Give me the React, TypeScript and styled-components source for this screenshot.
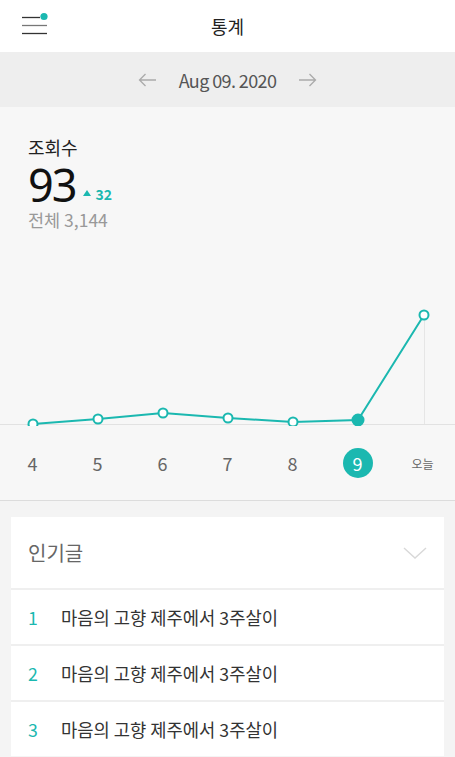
import React from "react";
import styled, { createGlobalStyle } from "styled-components";

const TEAL = "#1bb8b0";

const GlobalStyle = createGlobalStyle`
  html, body {
    margin: 0;
    padding: 0;
    background: #f4f4f4;
  }
  body {
    font-family: "Noto Sans CJK KR", "Noto Sans", sans-serif;
    color: #222;
  }
  * {
    box-sizing: border-box;
  }
`;

const Page = styled.div`
  width: 455px;
  min-height: 757px;
  display: flex;
  flex-direction: column;
  background: #f4f4f4;
`;

const Header = styled.header`
  height: 52px;
  display: flex;
  align-items: center;
  justify-content: center;
  background: #fff;
  position: relative;
`;

const MenuButton = styled.div`
  position: absolute;
  left: 22px;
  top: 12px;
  width: 28px;
  height: 26px;
`;

const Title = styled.h1`
  margin: 0;
  font-size: 18px;
  font-weight: 400;
  line-height: 24px;
  color: #222;
`;

const DateBar = styled.div`
  height: 55px;
  background: #eeeeee;
  display: flex;
  align-items: center;
  justify-content: center;
  gap: 22px;
`;

const DateText = styled.span`
  font-size: 18px;
  line-height: 24px;
  color: #555;
  letter-spacing: -0.6px;
`;

const StatsPanel = styled.section`
  background: #f7f7f7;
  border-bottom: 1px solid #dcdcdc;
`;

const Stats = styled.div`
  padding: 28px 28px 0;
  display: flex;
  flex-direction: column;
`;

const StatLabel = styled.div`
  font-size: 18px;
  line-height: 24px;
  color: #222;
`;

const CountRow = styled.div`
  display: flex;
  align-items: center;
  gap: 8px;
  margin-top: 1px;
`;

const Count = styled.span`
  font-size: 45px;
  line-height: 50px;
  letter-spacing: -2px;
  color: #111;
  font-family: "Noto Sans", sans-serif;
`;

const Delta = styled.span`
  margin-top: 18px;
  display: flex;
  align-items: center;
  gap: 4px;
  font-size: 14px;
  font-weight: 700;
  line-height: 18px;
  color: ${TEAL};
`;

const Triangle = styled.span`
  width: 0;
  height: 0;
  border-left: 4px solid transparent;
  border-right: 4px solid transparent;
  border-bottom: 6px solid ${TEAL};
  margin-top: -3px;
`;

const Total = styled.div`
  font-size: 17.5px;
  line-height: 20px;
  color: #999;
`;

const Chart = styled.svg`
  display: block;
  width: 455px;
  height: 196px;
`;

const DayRow = styled.div`
  height: 74px;
  display: grid;
  grid-template-columns: repeat(7, 1fr);
  align-items: center;
  justify-items: center;
`;

const Day = styled.span<{ $active?: boolean; $small?: boolean }>`
  width: 30px;
  height: 30px;
  border-radius: 50%;
  display: flex;
  align-items: center;
  justify-content: center;
  font-size: ${(p) => (p.$small ? "12px" : "18px")};
  color: ${(p) => (p.$active ? "#fff" : "#666")};
  background: ${(p) => (p.$active ? TEAL : "transparent")};
  white-space: nowrap;
`;

const ListArea = styled.section`
  padding: 16px 11px 0;
`;

const Card = styled.div`
  display: flex;
  flex-direction: column;
  gap: 2px;
  background: #efefef;
`;

const CardHeader = styled.div`
  height: 71px;
  background: #fff;
  display: flex;
  align-items: center;
  justify-content: space-between;
  padding: 0 17px;
`;

const CardTitle = styled.span`
  font-size: 20px;
  color: #666;
`;

const Item = styled.div`
  height: 54px;
  background: #fff;
  display: flex;
  align-items: center;
  padding-left: 17px;
  font-size: 17.7px;
  color: #333;
`;

const Rank = styled.span`
  width: 33px;
  color: ${TEAL};
`;

const Arrow = ({ dir }: { dir: "left" | "right" }) => (
  <svg width="19" height="14" viewBox="0 0 19 14" fill="none" stroke="#aaa" strokeWidth="1.3">
    {dir === "left" ? (
      <path d="M18 7H1.5M7.5 1 1.5 7l6 6" />
    ) : (
      <path d="M1 7h16.5M11.5 1l6 6-6 6" />
    )}
  </svg>
);

const points = [
  { x: 33, y: 194 },
  { x: 98, y: 189 },
  { x: 163, y: 183 },
  { x: 228, y: 188 },
  { x: 293, y: 192 },
  { x: 358, y: 190 },
  { x: 424, y: 85 },
];

const days = ["4", "5", "6", "7", "8", "9", "오늘"];

const posts = [1, 2, 3].map((n) => ({ rank: n, title: "마음의 고향 제주에서 3주살이" }));

export default function App() {
  return (
    <Page>
      <GlobalStyle />
      <Header>
        <MenuButton>
          <svg width="28" height="26" viewBox="0 0 28 26">
            <line x1="0" y1="5.5" x2="18" y2="5.5" stroke="#333" strokeWidth="1.3" />
            <line x1="0" y1="13.5" x2="25" y2="13.5" stroke="#777" strokeWidth="1.3" />
            <line x1="0" y1="21.5" x2="25" y2="21.5" stroke="#333" strokeWidth="1.3" />
            <circle cx="22" cy="4.5" r="3.6" fill={TEAL} />
          </svg>
        </MenuButton>
        <Title>통계</Title>
      </Header>

      <DateBar>
        <Arrow dir="left" />
        <DateText>Aug 09. 2020</DateText>
        <Arrow dir="right" />
      </DateBar>

      <StatsPanel>
        <Stats>
          <StatLabel>조회수</StatLabel>
          <CountRow>
            <Count>93</Count>
            <Delta>
              <Triangle />
              32
            </Delta>
          </CountRow>
          <Total>전체 3,144</Total>
        </Stats>

        <Chart viewBox="0 0 455 196">
          <line x1="0" y1="194.5" x2="455" y2="194.5" stroke="#e2e2e2" strokeWidth="1" />
          <line x1="424.5" y1="90" x2="424.5" y2="194" stroke="#e6e6e6" strokeWidth="1" />
          <polyline
            points={points.map((p) => `${p.x},${p.y}`).join(" ")}
            fill="none"
            stroke={TEAL}
            strokeWidth="2"
          />
          {points.map((p, i) => (
            <circle
              key={i}
              cx={p.x}
              cy={p.y}
              r={i === 5 ? 5.5 : 4.5}
              fill={i === 5 ? TEAL : "#fff"}
              stroke={TEAL}
              strokeWidth="2"
            />
          ))}
        </Chart>

        <DayRow>
          {days.map((d, i) => (
            <Day key={d} $active={i === 5} $small={d === "오늘"}>
              {d}
            </Day>
          ))}
        </DayRow>
      </StatsPanel>

      <ListArea>
        <Card>
          <CardHeader>
            <CardTitle>인기글</CardTitle>
            <svg width="24" height="12" viewBox="0 0 24 12" fill="none" stroke="#d8d8d8" strokeWidth="1.4">
              <path d="M1 1l11 10L23 1" />
            </svg>
          </CardHeader>
          {posts.map((p) => (
            <Item key={p.rank}>
              <Rank>{p.rank}</Rank>
              {p.title}
            </Item>
          ))}
        </Card>
      </ListArea>
    </Page>
  );
}
